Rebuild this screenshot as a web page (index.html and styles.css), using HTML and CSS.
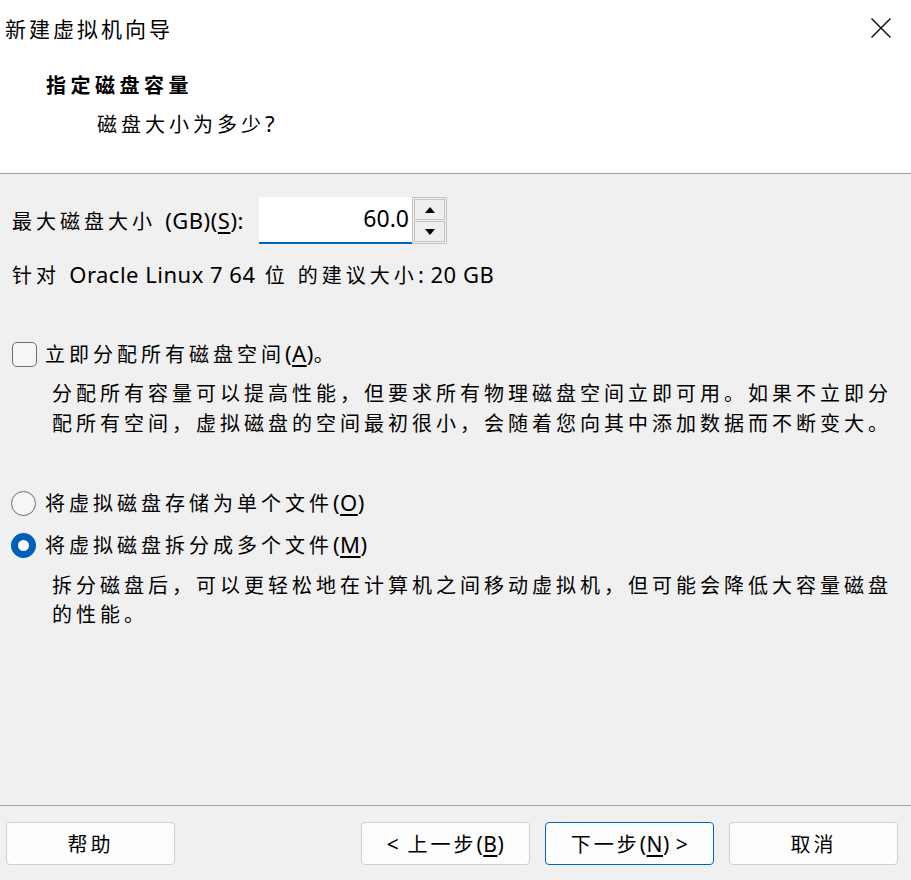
FILE: index.html
```html
<!DOCTYPE html>
<html lang="zh-CN">
<head>
<meta charset="utf-8">
<title>新建虚拟机向导</title>
<link rel="stylesheet" href="styles.css">
</head>
<body>
<div class="dialog">
  <div class="top">
    <div class="titlebar">
      <span class="title">新建虚拟机向导</span>
      <svg class="close" width="22" height="22" viewBox="0 0 22 22"><path d="M1.5 1.5 L20.5 20.5 M20.5 1.5 L1.5 20.5" stroke="#1a1a1a" stroke-width="1.6" fill="none"/></svg>
    </div>
    <div class="header">
      <div class="h-title">指定磁盘容量</div>
      <div class="h-sub">磁盘大小为多少<span class="en">?</span></div>
    </div>
  </div>

  <div class="content">
    <div class="size-row">
      <label class="size-label">最大磁盘大小 <span class="en">(GB)(<u>S</u>):</span></label>
      <div class="input">60.0</div>
      <div class="spin">
        <div class="spin-btn"><span class="tri up"></span></div>
        <div class="spin-btn"><span class="tri down"></span></div>
      </div>
    </div>
    <div class="recommend">针对 <span class="en">Oracle Linux 7 64</span> 位 的建议大小<span class="en">: 20 GB</span></div>

    <div class="opt check-row">
      <span class="checkbox"></span>
      <span class="opt-label">立即分配所有磁盘空间<span class="en">(<u>A</u>)</span>。</span>
    </div>
    <p class="desc">分配所有容量可以提高性能，但要求所有物理磁盘空间立即可用。如果不立即分配所有空间，虚拟磁盘的空间最初很小，会随着您向其中添加数据而不断变大。</p>

    <div class="opt radio-row first">
      <span class="radio"></span>
      <span class="opt-label">将虚拟磁盘存储为单个文件<span class="en">(<u>O</u>)</span></span>
    </div>
    <div class="opt radio-row">
      <span class="radio on"></span>
      <span class="opt-label">将虚拟磁盘拆分成多个文件<span class="en">(<u>M</u>)</span></span>
    </div>
    <p class="desc">拆分磁盘后，可以更轻松地在计算机之间移动虚拟机，但可能会降低大容量磁盘的性能。</p>
  </div>

  <div class="footer">
    <button class="btn help">帮助</button>
    <button class="btn"><span class="en">&lt;</span> 上一步<span class="en">(<u>B</u>)</span></button>
    <button class="btn primary">下一步<span class="en">(<u>N</u>) &gt;</span></button>
    <button class="btn">取消</button>
  </div>
</div>
</body>
</html>
```

FILE: styles.css
```css
* { box-sizing: border-box; }
html, body {
  margin: 0;
  padding: 0;
  width: 911px;
  height: 880px;
  overflow: hidden;
}
body {
  font-family: "Noto Sans", "Noto Sans CJK SC", sans-serif;
  font-size: 20px;
  letter-spacing: 4px;
  color: #000;
  background: #f0f0f0;
}
.en {
  font-size: 22px;
  letter-spacing: 0.5px;
}
u {
  text-underline-offset: 3px;
  text-decoration-thickness: 1.5px;
}
.dialog {
  display: flex;
  flex-direction: column;
  height: 880px;
}
.top {
  background: #fff;
  height: 174px;
  border-bottom: 1px solid #a0a0a0;
}
.titlebar {
  height: 56px;
  display: flex;
  align-items: center;
  justify-content: space-between;
  padding-left: 5px;
  padding-right: 19px;
}
.title {
  font-size: 21px;
  letter-spacing: 3px;
}
.close { display: block; }
.header {
  padding-top: 15px;
}
.h-title {
  margin-left: 46px;
  font-weight: bold;
  font-size: 20px;
  letter-spacing: 4.5px;
  line-height: 30px;
}
.h-sub {
  margin-left: 97px;
  margin-top: 7px;
  line-height: 30px;
}
.content {
  flex: 1;
  padding: 23px 16px 0 12px;
}
.size-row {
  display: flex;
  align-items: center;
  height: 47px;
}
.size-label {
  width: 247px;
  line-height: 30px;
}
.input {
  width: 153px;
  height: 47px;
  background: #fff;
  border-bottom: 2px solid #0067c0;
  text-align: right;
  font-family: "Noto Sans", sans-serif;
  font-size: 23px;
  letter-spacing: 0;
  padding-right: 3px;
  line-height: 42px;
}
.spin {
  width: 35px;
  height: 47px;
  border: 1px solid #c4c4c4;
  padding: 1px;
  display: flex;
  flex-direction: column;
  gap: 1px;
  background: #f0f0f0;
}
.spin-btn {
  flex: 1;
  border: 1px solid #c4c4c4;
  background: #efefef;
  display: flex;
  align-items: center;
  justify-content: center;
}
.tri {
  width: 0;
  height: 0;
  border-left: 5px solid transparent;
  border-right: 5px solid transparent;
}
.tri.up { border-bottom: 6px solid #000; }
.tri.down { border-top: 6px solid #000; }
.recommend {
  margin-top: 15px;
  line-height: 30px;
}
.opt {
  display: flex;
  align-items: center;
  height: 30px;
}
.check-row {
  margin-top: 48px;
}
.checkbox {
  width: 25px;
  height: 25px;
  border: 1.5px solid #6e6e6e;
  border-radius: 5px;
  background: #f6f6f6;
  margin-right: 8px;
  flex: none;
}
.radio {
  width: 25px;
  height: 25px;
  border-radius: 50%;
  border: 1.5px solid #6e6e6e;
  background: #f6f6f6;
  margin-left: -1px;
  margin-right: 9px;
  flex: none;
}
.radio.on {
  border: 7.5px solid #005fb8;
  background: #fff;
}
.opt-label {
  line-height: 30px;
}
.desc {
  margin: 10px 0 0 40px;
  line-height: 30px;
}
.desc:last-child {
  margin-top: 11px;
  line-height: 29px;
}
.radio-row.first {
  margin-top: 49px;
}
.radio-row + .radio-row {
  margin-top: 12px;
}
.footer {
  height: 75px;
  border-top: 1px solid #a0a0a0;
  display: flex;
  align-items: flex-start;
  padding: 16px 13px 0 6px;
  gap: 15px;
}
.btn {
  width: 169px;
  height: 43px;
  background: #fdfdfd;
  border: 1px solid #d0d0d0;
  border-radius: 4px;
  font-family: "Noto Sans", "Noto Sans CJK SC", sans-serif;
  font-size: 20px;
  letter-spacing: 3px;
  color: #000;
  padding: 0;
}
.btn .en {
  font-size: 21px;
}
.btn.help {
  margin-right: auto;
}
.btn.primary {
  border-color: #0067c0;
}
```
